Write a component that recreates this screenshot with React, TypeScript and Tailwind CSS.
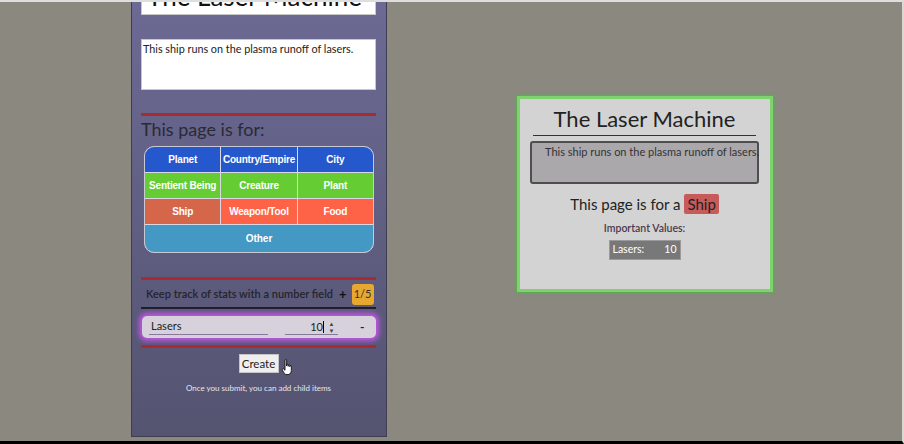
import React from "react";

const font = { fontFamily: 'Lato, "Open Sans", sans-serif' };

const cells = [
  { label: "Planet", bg: "bg-[#2458cc]" },
  { label: "Country/Empire", bg: "bg-[#2458cc]" },
  { label: "City", bg: "bg-[#2458cc]" },
  { label: "Sentient Being", bg: "bg-[#66cc33]" },
  { label: "Creature", bg: "bg-[#66cc33]" },
  { label: "Plant", bg: "bg-[#66cc33]" },
  { label: "Ship", bg: "bg-[#d6664a]" },
  { label: "Weapon/Tool", bg: "bg-[#ff6347]" },
  { label: "Food", bg: "bg-[#ff6347]" },
];

function HandCursor() {
  return (
    <svg width="13" height="17" viewBox="0 0 13 17" className="absolute left-[42px] top-[5px]">
      <path
        d="M4 1.2c0-.7 1.6-.7 1.6 0V7l.1-1.2c0-.7 1.5-.7 1.5 0V7.3l.1-.9c0-.7 1.5-.7 1.5 0v1.4l.1-.6c0-.7 1.4-.7 1.4 0v4.4c0 1.6-1 3.2-2.3 3.9H4.6C3.6 14.7 2.8 13.5 1.4 11 .8 10 1.9 9.2 2.7 10L4 11.3z"
        fill="#fff"
        stroke="#111"
        strokeWidth="0.9"
        strokeLinejoin="round"
      />
    </svg>
  );
}

export default function App() {
  return (
    <div
      style={font}
      className="w-[904px] h-[444px] overflow-hidden bg-[#8a887f] border-t-2 border-t-[#dedede] border-r-2 border-r-[#d9d9d2] border-b-[3px] border-b-black flex"
    >
      {/* --- Editor Panel --- */}
      <div className="ml-[131px] w-[256px] h-[435px] flex flex-col pl-[9px] pr-[10px] bg-gradient-to-b from-[#6c6a94] to-[#545370] border-x border-b border-[#3e3d52]">
        <div className="-mt-[28px] h-[41px] bg-white border border-[#c8c8c8] pt-[6px] pl-[5px] text-[26px] leading-[30px] text-[#111] whitespace-nowrap">
          The Laser Machine
        </div>
        <div className="mt-[24px] h-[51px] bg-white border border-[#c8c8c8] px-[1px] pt-[1px] text-[10.8px] text-[#222]">
          This ship runs on the plasma runoff of lasers.
        </div>
        <div className="mt-[23px] h-[3px] bg-[#aa2a2e]" />
        <div className="mt-[2px] text-[18px] leading-[22px] text-[#2a2a35]">This page is for:</div>

        <div
          style={{ fontFamily: '"Liberation Sans", Arial, sans-serif' }}
          className="mt-[6px] ml-[3px] mr-[2px] rounded-[10px] overflow-hidden border border-[#c9c9d6] bg-[#d8d8e4] grid grid-cols-3 gap-[1px] text-[10px] font-bold text-white"
        >
          {cells.map((c) => (
            <div key={c.label} className={`${c.bg} h-[25px] flex items-center justify-center whitespace-nowrap tracking-[-0.2px]`}>
              {c.label}
            </div>
          ))}
          <div className="col-span-3 bg-[#4499c4] h-[27px] flex items-center justify-center">Other</div>
        </div>

        <div className="mt-[24px] h-[3px] bg-[#aa2a2e]" />

        <div className="mt-[4px] flex items-center h-[21px] whitespace-nowrap">
          <span className="ml-[5px] text-[11px] font-semibold text-[#24242e]">
            Keep track of stats with a number field
          </span>
          <span className="ml-[6px] text-[13px] font-bold text-[#111]">+</span>
          <span className="ml-[5px] h-[21px] w-[22px] rounded-[3px] bg-[#e8a830] flex items-center justify-center text-[11px] text-[#333]">
            1/5
          </span>
        </div>
        <div className="mt-[2px] h-[2px] bg-[#1e1e26]" />

        <div className="mt-[7px] ml-[1px] h-[22px] rounded-[5px] bg-[#d6d1da] shadow-[0_0_5px_3px_#c255e6] flex items-center text-[11px] text-[#222]">
          <div className="ml-[7px] w-[119px] h-[16px] border-b border-[#857a99] pl-[2px] leading-[14px]">Lasers</div>
          <div className="ml-[17px] w-[53px] h-[16px] border-b border-[#857a99] flex items-center justify-end leading-[14px]">
            <span>10</span>
            <span className="w-[1px] h-[12px] bg-black" />
            <div className="ml-[3px] mr-[2px] w-[9px] h-[14px] flex flex-col items-center justify-center text-[6px] leading-[7px] text-[#444]">
              <span>▲</span>
              <span>▼</span>
            </div>
          </div>
          <span className="ml-[22px] font-bold text-[12px]">-</span>
        </div>

        <div className="mt-[7px] h-[3px] bg-[#aa2a2e]" />

        <div className="mt-[6px] flex justify-center">
          <div className="relative">
            <div className="w-[40px] h-[19px] bg-[#efefef] border border-[#c4c4c4] flex items-center justify-center text-[11.5px] text-[#222]">
              Create
            </div>
            <HandCursor />
          </div>
        </div>
        <div className="mt-[9px] text-center text-[8px] text-[#e6e6f0]">Once you submit, you can add child items</div>
      </div>

      {/* --- Preview --- */}
      <div className="flex-1 flex justify-center pt-[94px]">
        <div className="w-[256px] h-[196px] bg-[#d3d3d3] border-[3px] border-[#7fd36e] shadow-[0_0_2px_1px_#55b54a] flex flex-col items-center">
          <div className="mt-[6px] text-[22px] leading-[28px] text-[#222]">The Laser Machine</div>
          <div className="mt-[2px] w-[223px] h-[1px] bg-[#333]" />
          <div className="mt-[5px] w-[229px] h-[43px] bg-[#aaa8ab] border-2 border-[#4e4e4e] rounded-[3px] pl-[13px] pt-[1px] text-[11px] text-[#333] whitespace-nowrap">
            This ship runs on the plasma runoff of lasers.
          </div>
          <div className="mt-[9px] flex items-center text-[15px] text-[#222]">
            <span>This page is for a</span>
            <span className="ml-[4px] bg-[#c75a5b] px-[3px] h-[20px] leading-[20px] rounded-[2px]">Ship</span>
          </div>
          <div className="mt-[5px] text-[10.5px] font-semibold text-[#4a3a4c]">Important Values:</div>
          <div className="mt-[4px] w-[72px] h-[20px] bg-[#787878] border border-[#9a9a9a] flex items-center justify-between px-[3px] text-[10.5px] text-white">
            <span>Lasers:</span>
            <span>10</span>
          </div>
        </div>
      </div>
    </div>
  );
}
